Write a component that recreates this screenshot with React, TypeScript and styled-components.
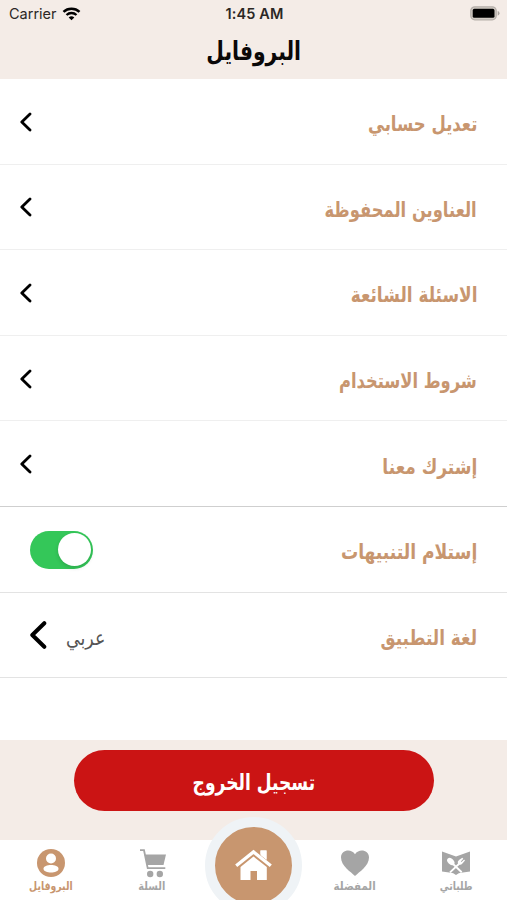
import React from 'react';
import styled, { createGlobalStyle } from 'styled-components';

const tan = '#c8966f';
const gray = '#a5a5a5';
const cream = '#f4ece7';
const arabic = '"DejaVu Sans", sans-serif';

const GlobalStyle = createGlobalStyle`
  *, *::before, *::after { box-sizing: border-box; }
  body { margin: 0; background: #fff; overflow: hidden; }
  svg { display: block; }
`;

const Screen = styled.div`
  width: 507px;
  height: 900px;
  display: flex;
  flex-direction: column;
  background: #fff;
  overflow: hidden;
  font-family: ${arabic};
`;

const Header = styled.header`
  height: 79px;
  background: ${cream};
`;

const StatusBar = styled.div`
  height: 28px;
  display: grid;
  grid-template-columns: 1fr auto 1fr;
  align-items: center;
  padding: 0 7px 1px 9px;
  font: 400 14.5px Inter, sans-serif;
  color: #2b2725;
`;

const Carrier = styled.div`
  display: flex;
  align-items: center;
  gap: 5px;
`;

const Clock = styled.div`
  font-weight: 600;
  font-size: 14.5px;
  letter-spacing: 0.1px;
`;

const BatterySlot = styled.div`
  justify-self: end;
`;

const Label = styled.span<{ $size: number; $stretch?: number; $origin?: string; $bold?: boolean }>`
  display: inline-block;
  white-space: nowrap;
  font-size: ${p => p.$size}px;
  font-weight: ${p => (p.$bold === false ? 400 : 700)};
  line-height: 1.2;
  transform: scaleX(${p => p.$stretch ?? 1});
  transform-origin: ${p => p.$origin ?? 'right'} center;
`;

const Title = styled.h1`
  margin: 0;
  height: 48px;
  display: flex;
  align-items: center;
  justify-content: center;
  color: #0a0808;
`;

const List = styled.main`
  flex: 1;
`;

const Row = styled.div<{ $line: string }>`
  height: 85.6px;
  display: flex;
  align-items: center;
  justify-content: space-between;
  padding: 7px 30px 0 20px;
  border-bottom: 1.5px solid ${p => p.$line};
  color: ${tan};
`;

const Chevron = styled.svg<{ $weight: number }>`
  margin-top: -6px;
  fill: none;
  stroke: #000;
  stroke-width: ${p => p.$weight};
  stroke-linecap: round;
  stroke-linejoin: round;
`;

const Toggle = styled.div`
  width: 63px;
  height: 38px;
  margin: -6px 0 0 10px;
  padding: 2.5px;
  border-radius: 19px;
  background: #34c759;
  display: flex;
  justify-content: flex-end;
`;

const Knob = styled.div`
  width: 33px;
  height: 33px;
  border-radius: 50%;
  background: #fff;
  box-shadow: 0 2px 4px rgba(0, 0, 0, 0.14);
`;

const Language = styled.div`
  display: flex;
  align-items: center;
  gap: 19px;
  margin-left: 10px;
  color: #555;
`;

const LogoutArea = styled.section`
  height: 100px;
  display: flex;
  justify-content: center;
  padding-top: 10px;
  background: ${cream};
`;

const LogoutButton = styled.button`
  width: 360px;
  height: 61px;
  border: 0;
  border-radius: 31px;
  padding: 6px 0 0;
  background: #cb1414;
  color: #fff;
  font-family: inherit;
`;

const TabBar = styled.nav`
  position: relative;
  height: 60px;
  display: flex;
  justify-content: space-between;
  background: #fff;
`;

const TabPair = styled.div`
  display: grid;
  grid-template-columns: repeat(2, 101.5px);
`;

const Tab = styled.div<{ $active?: boolean }>`
  height: 60px;
  display: flex;
  flex-direction: column;
  align-items: center;
  padding-top: 8px;
  gap: 2px;
  color: ${p => (p.$active ? tan : gray)};
`;

const HomeButton = styled.div`
  position: absolute;
  left: 205px;
  top: -23px;
  width: 97px;
  height: 97px;
  border: 10.5px solid #eff3f6;
  border-radius: 50%;
  background: ${tan};
  display: grid;
  place-items: center;
`;

const rows = [
  { text: 'تعديل حسابي', stretch: 0.785, line: '#efefef' },
  { text: 'العناوين المحفوظة', stretch: 0.778, line: '#efefef' },
  { text: 'الاسئلة الشائعة', stretch: 0.805, line: '#efefef' },
  { text: 'شروط الاستخدام', stretch: 0.775, line: '#efefef' },
  { text: 'إشترك معنا', stretch: 0.81, line: '#cfcfcf' },
];

const WifiIcon = () => (
  <svg width="19" height="14" viewBox="0 0 18 14" fill="none" stroke="#000">
    <path d="M1 4.9C5.4.7 12.6.7 17 4.9" strokeWidth="2.5" />
    <path d="M4 8C6.8 5.3 11.2 5.3 14 8" strokeWidth="2.3" />
    <path d="M9 13.3 6.2 10.5Q9 8.2 11.8 10.5Z" fill="#000" stroke="none" />
  </svg>
);

const BatteryIcon = () => (
  <svg width="30" height="15" viewBox="0 0 30 15">
    <rect x=".8" y=".8" width="25.4" height="13" rx="4" fill="#d3ccc5" stroke="#b5afaa" strokeWidth="1.3" />
    <rect x="2.7" y="2.8" width="21.8" height="9" rx="1.6" fill="#000" />
    <path d="M27.7 5v4.7Q29.5 9 29.5 7.3T27.7 5Z" fill="#aaa49f" />
  </svg>
);

const ProfileIcon = () => (
  <svg width="30" height="30" viewBox="0 0 30 30">
    <circle cx="15" cy="15" r="14" fill="currentColor" />
    <circle cx="15" cy="10.5" r="5" fill="#fff" />
    <path d="M7.5 20.8C7.5 15.8 22.5 15.8 22.5 20.8C22.5 25.8 7.5 25.8 7.5 20.8Z" fill="#fff" />
  </svg>
);

const CartIcon = () => (
  <svg width="30" height="30" viewBox="0 0 30 30" fill="currentColor">
    <path d="M7.6 6.5H29L26.5 17H10Z" />
    <path d="M3 2.2H7L10.7 20.2H28.3" fill="none" stroke="currentColor" strokeWidth="1.8" />
    <circle cx="13.2" cy="26" r="3.2" />
    <circle cx="22.8" cy="26" r="3.2" />
  </svg>
);

const HeartIcon = () => (
  <svg width="30" height="30" viewBox="0 0 30 30" fill="currentColor">
    <path d="M15 28C11 24 1 18 1 9.5C1 2 11 .2 15 6.2C19 .2 29 2 29 9.5C29 18 19 24 15 28Z" />
  </svg>
);

const MenuIcon = () => (
  <svg width="30" height="30" viewBox="0 0 30 30" fill="currentColor">
    <path d="M1 3.5 15 8.5 29 3.5V23.5L20 24.8Q18 24.8 15 27Q12 24.8 10 24.8L1 23.5Z" />
    <g fill="#fff">
      <ellipse cx="9.8" cy="13.5" rx="2.9" ry="4.2" transform="rotate(-45 9.8 13.5)" />
      <path d="M17 16Q16 13.5 18 12L21.3 9.8 22.3 10.8 19.8 13.4 20.5 14.1 23.1 11.5 24 12.4 21.4 15.6Q19.5 17.8 17 16Z" />
      <path d="m11.5 15.5 9.2 8.8M18.7 15.3 9 24.4" stroke="#fff" strokeWidth="1.9" />
    </g>
  </svg>
);

const HomeIcon = () => (
  <svg width="40" height="34" viewBox="0 0 40 34" fill="#fff">
    <path d="M6.5 18 19.5 7.5 32.8 18V31H23V22H16.5V31H6.5Z" />
    <path d="M26.5 1.5H32.5V12L26.5 7Z" />
    <path d="M2.2 16.9 19.5 2.9 36.8 16.9" fill="none" stroke={tan} strokeWidth="5.2" />
    <path d="M2.2 16.7 19.5 2.9 36.8 16.7" fill="none" stroke="#fff" strokeWidth="3.3" />
    <path d="M26.5 1.5H32.5V11L26.5 6Z" />
  </svg>
);

const SmallChevron = () => (
  <Chevron $weight={2.8} width="14" height="22" viewBox="0 0 14 22">
    <path d="M10 2.9 1.8 11l8.2 8.1" />
  </Chevron>
);

export default function App() {
  return (
    <>
      <GlobalStyle />
      <Screen>
        <Header>
          <StatusBar>
            <Carrier>Carrier <WifiIcon /></Carrier>
            <Clock>1:45 AM</Clock>
            <BatterySlot><BatteryIcon /></BatterySlot>
          </StatusBar>
          <Title><Label $size={26} $stretch={0.78} $origin="center">البروفايل</Label></Title>
        </Header>
        <List>
          {rows.map(row => (
            <Row key={row.text} $line={row.line}>
              <SmallChevron />
              <Label $size={21} $stretch={row.stretch}>{row.text}</Label>
            </Row>
          ))}
          <Row $line="#e3e3e3">
            <Toggle role="switch" aria-checked="true"><Knob /></Toggle>
            <Label $size={21} $stretch={0.815}>إستلام التنبيهات</Label>
          </Row>
          <Row $line="#e3e3e3">
            <Language>
              <Chevron $weight={4} width="17" height="30" viewBox="0 0 17 30">
                <path d="M14.3 3.2 2.3 15l12 11.8" />
              </Chevron>
              <Label $size={20} $stretch={0.87} $bold={false} $origin="left">عربي</Label>
            </Language>
            <Label $size={21} $stretch={0.805}>لغة التطبيق</Label>
          </Row>
        </List>
        <LogoutArea>
          <LogoutButton><Label $size={22} $stretch={0.777} $origin="center">تسجيل الخروج</Label></LogoutButton>
        </LogoutArea>
        <TabBar>
          <TabPair>
            <Tab $active><ProfileIcon /><Label $size={11.5} $stretch={0.81} $origin="center">البروفايل</Label></Tab>
            <Tab><CartIcon /><Label $size={11.5} $stretch={0.85} $origin="center">السلة</Label></Tab>
          </TabPair>
          <HomeButton><HomeIcon /></HomeButton>
          <TabPair>
            <Tab><HeartIcon /><Label $size={11.5} $stretch={0.89} $origin="center">المفضلة</Label></Tab>
            <Tab><MenuIcon /><Label $size={11.5} $stretch={0.81} $origin="center">طلباتي</Label></Tab>
          </TabPair>
        </TabBar>
      </Screen>
    </>
  );
}
